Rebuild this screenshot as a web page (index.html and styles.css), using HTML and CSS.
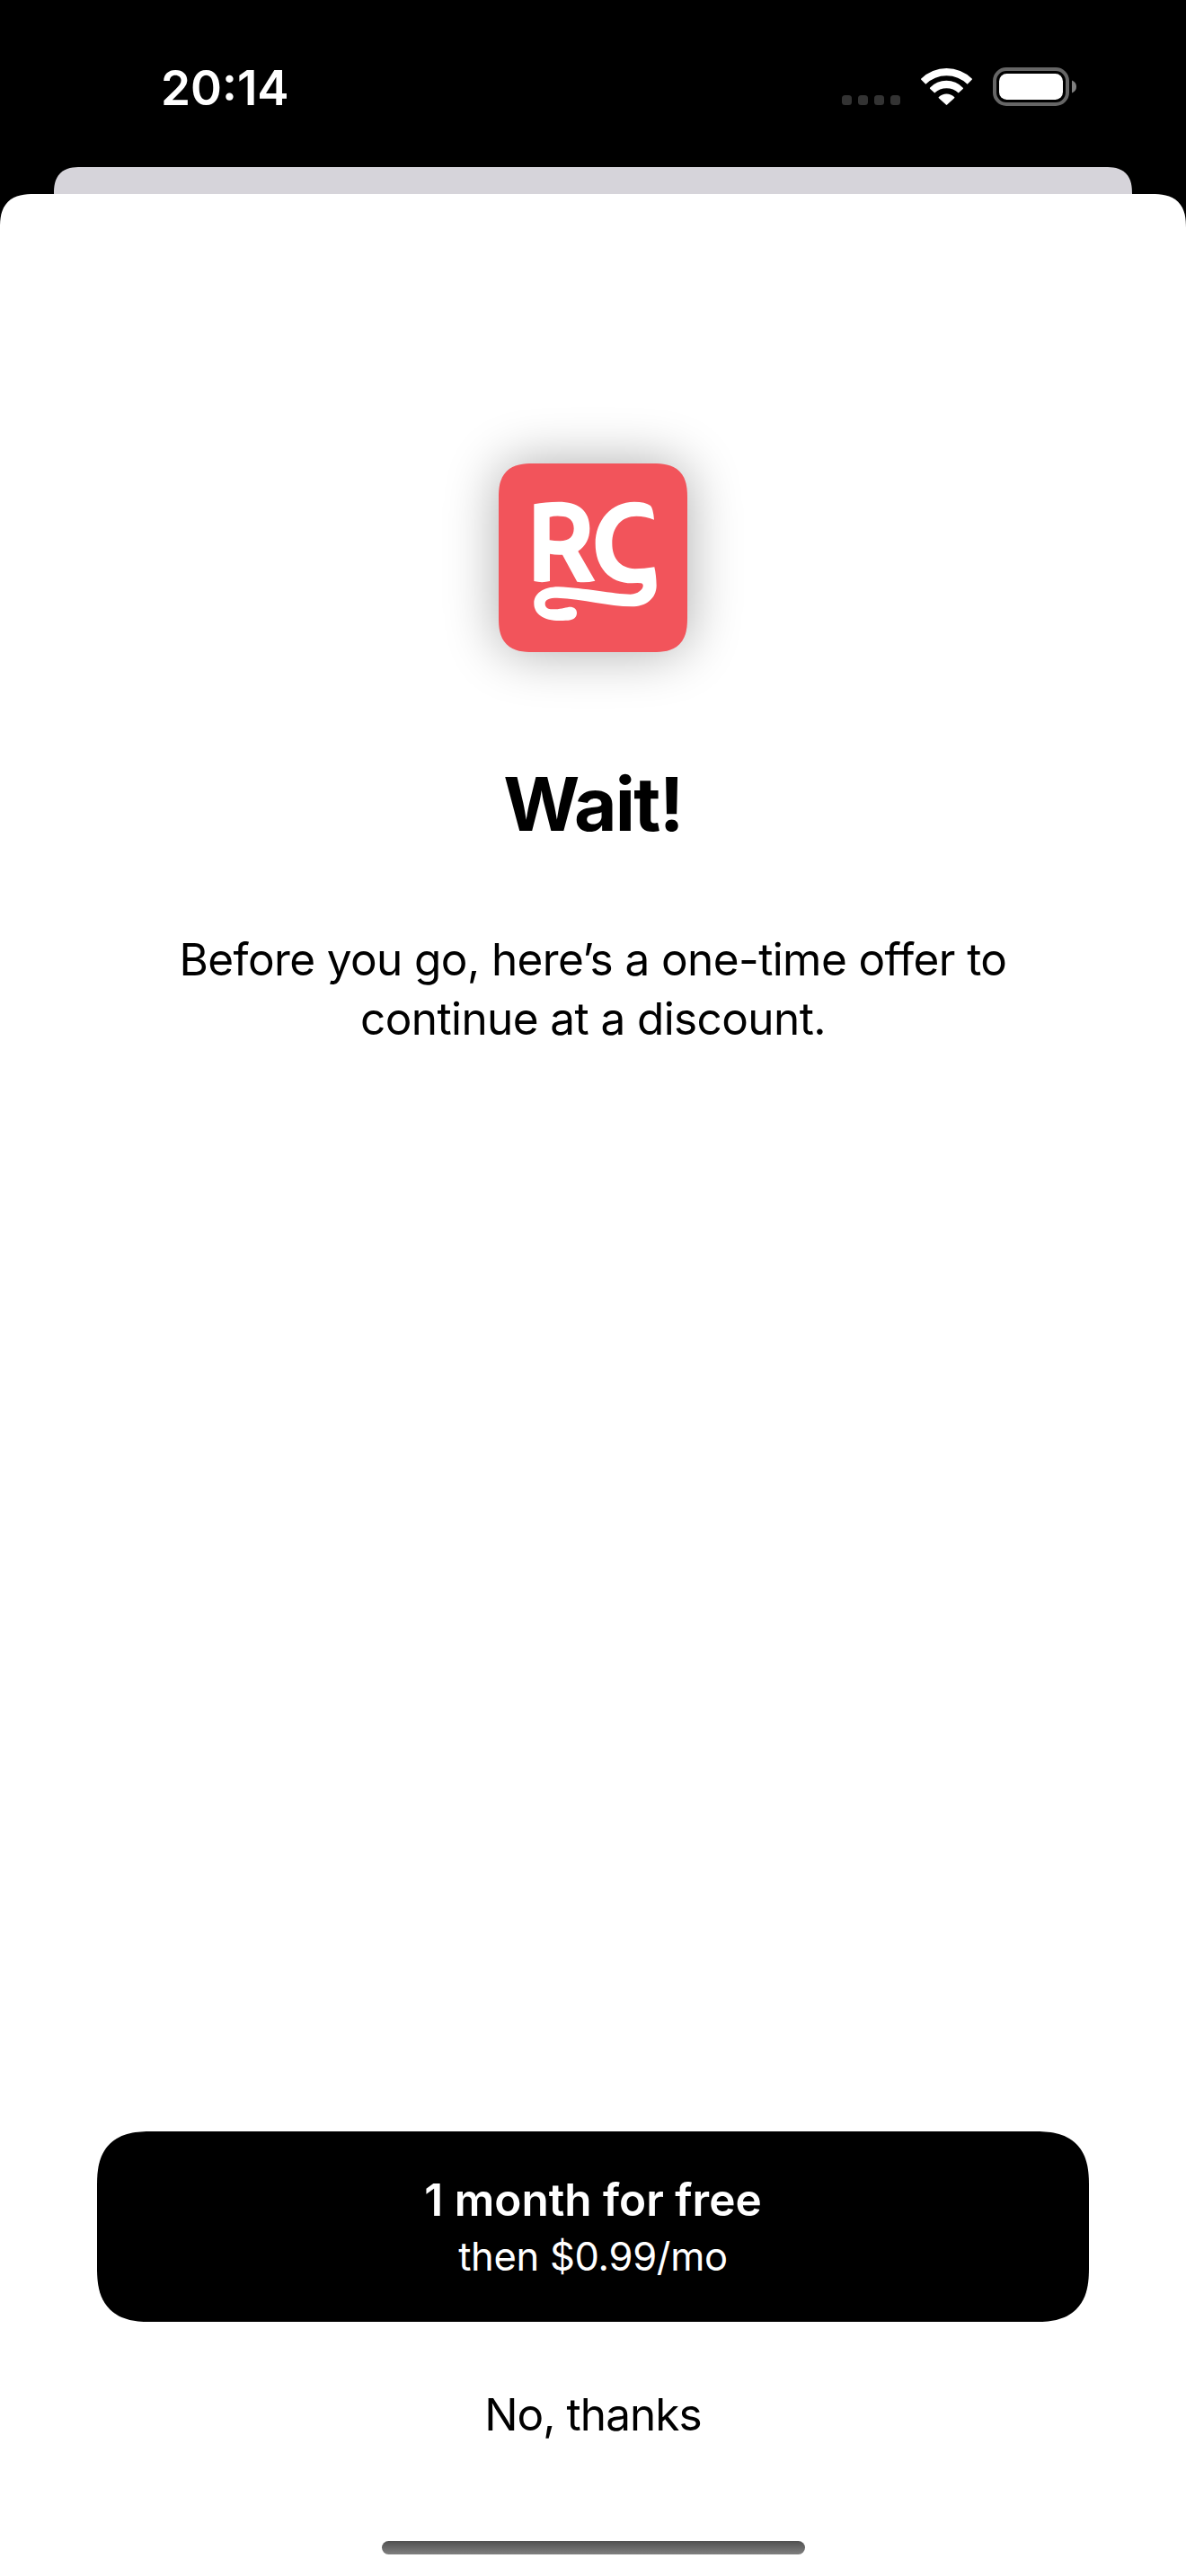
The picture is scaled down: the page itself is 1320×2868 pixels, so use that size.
FILE: index.html
```html
<!DOCTYPE html>
<html lang="en">
<head>
<meta charset="utf-8">
<title>One-time offer</title>
<link rel="stylesheet" href="styles.css">
</head>
<body>
<header class="status">
  <time class="clock">20:14</time>
  <div class="indicators">
    <svg class="cellular" viewBox="0 0 65 11"><g fill="#333"><rect width="11" height="11" rx="3.5"/><rect x="18" width="11" height="11" rx="3.5"/><rect x="36" width="11" height="11" rx="3.5"/><rect x="54" width="11" height="11" rx="3.5"/></g></svg>
    <svg class="wifi" viewBox="315 45 172 126"><path fill="#fff" d="M316 82A122 122 0 0 1 486 82Q488 84 486 86L471 101A101 101 0 0 0 331 101L316 86Q314 84 316 82ZM345 113A76 76 0 0 1 456 113Q458 115 456 117L441 131A57 57 0 0 0 361 131L346 117Q344 115 345 113ZM375 144A37 37 0 0 1 427 144Q429 146 427 148L403 170Q401 172 399 170L375 148Q373 146 375 144Z"/></svg>
    <svg class="battery" viewBox="0 0 93 43"><rect x="2" y="2" width="81" height="39" rx="13" fill="none" stroke="#666" stroke-width="4"/><rect x="7" y="7" width="71" height="29" rx="8.5" fill="#fff"/><path d="M88 14.5Q93 16.500 93 21.500T88 28.500Z" fill="#808080"/></svg>
  </div>
</header>
<div class="card-behind"></div>
<main class="sheet">
  <svg class="logo" viewBox="165 168 630 630" role="img" aria-label="RC">
    <g fill="#fff">
      <path fill-rule="evenodd" d="M283 304Q320 296 365 296C430 296 469 325 469 385C469 420 455 445 430 461L487 560Q455 568 427 563L378 473Q355 474 336 470V561Q310 568 283 561ZM335 347V424Q350 427 370 427C400 427 416 412 416 385C416 358 400 344 370 344Q350 343 335 347Z"/>
      <path d="M684 356Q681 318 672 309Q655 296 618 296C540 296 488 360 488 435C488 515 535 568 610 568Q640 565 645 570C654 580 635 605 605 605C550 605 450 583 365 580C310 580 283 605 283 635C283 670 315 693 368 693C385 693 395 693 405 691C418 688 426 680 426 667C426 653 415 646 400 647C385 650 370 655 345 655C328 655 320 648 320 636C320 622 335 617 360 617C450 620 530 646 610 646C655 646 692 620 692 575Q691 540 685 514Q650 520 620 520C570 517 544 485 544 435C544 380 575 344 625 344Q655 344 684 356Z"/>
    </g>
  </svg>
  <h1 class="title">Wait!</h1>
  <p class="message">Before you go, here’s a one-time offer to<br>continue at a discount.</p>
  <footer class="actions">
    <button class="purchase"><span class="offer">1 month for free</span><span class="price">then $0.99/mo</span></button>
    <button class="dismiss">No, thanks</button>
  </footer>
  <div class="home-indicator"></div>
</main>
</body>
</html>
```

FILE: styles.css
```css
* { box-sizing: border-box; }

body {
  margin: 0;
  height: 2868px;
  display: flex;
  flex-direction: column;
  background: #000;
  color: #000;
  font-family: Inter, "Liberation Sans", sans-serif;
}

button {
  border: 0;
  padding: 0;
  background: none;
  color: inherit;
  font: inherit;
}

.status {
  height: 186px;
  display: flex;
  justify-content: space-between;
  padding: 66px 122px 0 179px;
  color: #fff;
}

.clock {
  font-size: 53px;
  font-weight: 600;
  line-height: 64px;
}

.indicators {
  display: flex;
  align-items: flex-end;
  gap: 23px;
  height: 52px;
}

.cellular { width: 65px; height: 11px; margin-bottom: 1px; }
.wifi { width: 57px; height: 42px; margin-bottom: 1px; }
.battery { width: 93px; height: 43px; }

.card-behind {
  height: 30px;
  margin: 0 60px;
  border-radius: 30px 30px 0 0;
  background: #d6d4da;
}

.sheet {
  flex: 1;
  display: flex;
  flex-direction: column;
  align-items: center;
  padding: 300px 108px 24px;
  border-radius: 30px 30px 0 0;
  background: #fff;
}

.logo {
  width: 210px;
  height: 210px;
  border-radius: 30px;
  background: #f2545b;
  box-shadow: 0 0 60px rgba(0, 0, 0, 0.33);
}

.title {
  margin: 120px 0 0;
  font-size: 82px;
  font-weight: 700;
  line-height: 100px;
  letter-spacing: -1.7px;
}

.message {
  margin: 89px 0 0;
  font-size: 49.5px;
  line-height: 66px;
  letter-spacing: -0.6px;
  text-align: center;
  white-space: nowrap;
}

.actions {
  align-self: stretch;
  margin-top: auto;
  display: flex;
  flex-direction: column;
  align-items: center;
}

.purchase {
  align-self: stretch;
  height: 212px;
  display: flex;
  flex-direction: column;
  align-items: center;
  justify-content: center;
  padding-top: 1px;
  border-radius: 48px;
  background: #000;
  color: #fff;
}

.offer {
  font-size: 49.5px;
  font-weight: 600;
  line-height: 66px;
}

.price {
  font-size: 43.5px;
  line-height: 61px;
  letter-spacing: -0.3px;
}

.dismiss {
  margin-top: 70px;
  font-size: 49.5px;
  line-height: 66px;
  letter-spacing: -0.95px;
}

.home-indicator {
  width: 471px;
  height: 15px;
  margin-top: 108px;
  border-radius: 8px;
  background: linear-gradient(#505050, #808080);
}

@supports (corner-shape: superellipse(1.4)) {
  .card-behind, .sheet { border-radius: 38px 38px 0 0; corner-shape: superellipse(1.4); }
  .logo { border-radius: 38px; corner-shape: superellipse(1.4); }
  .purchase { border-radius: 61px; corner-shape: superellipse(1.4); }
}
```
